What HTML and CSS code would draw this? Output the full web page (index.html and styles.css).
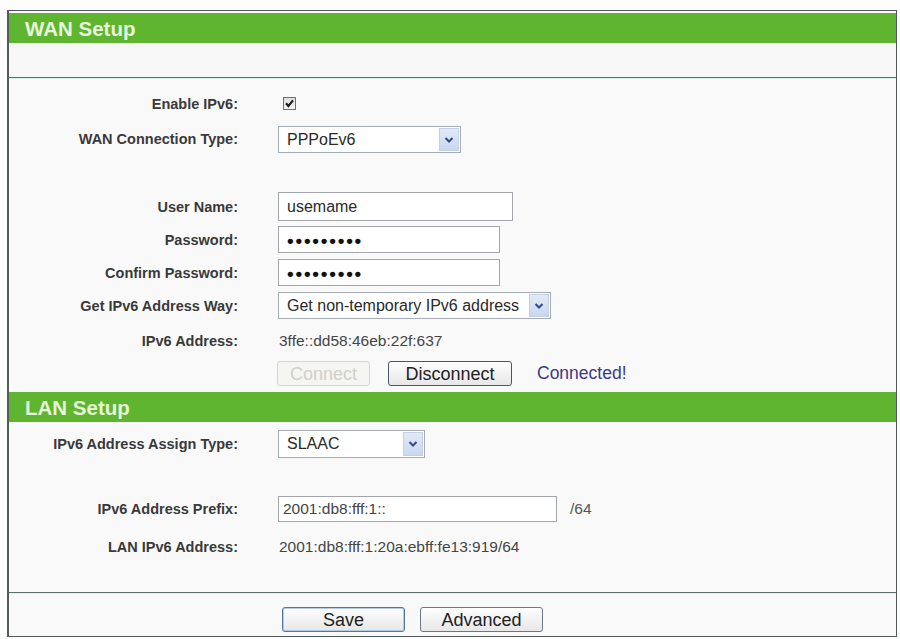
FILE: index.html
```html
<!DOCTYPE html>
<html>
<head>
<meta charset="utf-8">
<title>IPv6 Setup</title>
<link rel="stylesheet" href="styles.css">
</head>
<body>
<div class="panel">
  <div class="head head-wan">WAN Setup</div>
  <div class="band"></div>
  <div class="wan">
    <div class="row row-check">
      <div class="lbl">Enable IPv6:</div>
      <div class="val">
        <span class="checkbox"><svg width="11" height="11" viewBox="0 0 11 11"><path d="M2 5.2 L4.4 8 L9 2.4" fill="none" stroke="#1e1e1e" stroke-width="2.2"/></svg></span>
      </div>
    </div>
    <div class="row row-type">
      <div class="lbl">WAN Connection Type:</div>
      <div class="val">
        <div class="select sel-type"><span class="txt">PPPoEv6</span><span class="arrow"><svg width="10" height="8" viewBox="0 0 10 8"><path d="M1.5 2 L5 5.5 L8.5 2" fill="none" stroke="#2d4a9a" stroke-width="2"/></svg></span></div>
      </div>
    </div>
    <div class="spacer-a"></div>
    <div class="row">
      <div class="lbl">User Name:</div>
      <div class="val"><div class="field f-user">usemame</div></div>
    </div>
    <div class="row">
      <div class="lbl">Password:</div>
      <div class="val"><div class="field f-pass"><span class="dots">•••••••••</span></div></div>
    </div>
    <div class="row">
      <div class="lbl">Confirm Password:</div>
      <div class="val"><div class="field f-pass"><span class="dots">•••••••••</span></div></div>
    </div>
    <div class="row">
      <div class="lbl">Get IPv6 Address Way:</div>
      <div class="val">
        <div class="select sel-way"><span class="txt">Get non-temporary IPv6 address</span><span class="arrow"><svg width="10" height="8" viewBox="0 0 10 8"><path d="M1.5 2 L5 5.5 L8.5 2" fill="none" stroke="#2d4a9a" stroke-width="2"/></svg></span></div>
      </div>
    </div>
    <div class="row row-addr">
      <div class="lbl">IPv6 Address:</div>
      <div class="val"><span class="text">3ffe::dd58:46eb:22f:637</span></div>
    </div>
    <div class="row row-btns">
      <div class="lbl"></div>
      <div class="val">
        <button class="btn btn-connect" disabled>Connect</button>
        <button class="btn btn-disconnect">Disconnect</button>
        <span class="status">Connected!</span>
      </div>
    </div>
  </div>
  <div class="head">LAN Setup</div>
  <div class="lan">
    <div class="row row-assign">
      <div class="lbl">IPv6 Address Assign Type:</div>
      <div class="val">
        <div class="select sel-slaac"><span class="txt">SLAAC</span><span class="arrow"><svg width="10" height="8" viewBox="0 0 10 8"><path d="M1.5 2 L5 5.5 L8.5 2" fill="none" stroke="#2d4a9a" stroke-width="2"/></svg></span></div>
      </div>
    </div>
    <div class="spacer-b"></div>
    <div class="row row-prefix">
      <div class="lbl">IPv6 Address Prefix:</div>
      <div class="val"><div class="field f-prefix">2001:db8:fff:1::</div><span class="suffix">/64</span></div>
    </div>
    <div class="row row-lanaddr">
      <div class="lbl">LAN IPv6 Address:</div>
      <div class="val"><span class="text">2001:db8:fff:1:20a:ebff:fe13:919/64</span></div>
    </div>
  </div>
  <div class="foot">
    <button class="btn btn-save">Save</button>
    <button class="btn btn-adv">Advanced</button>
  </div>
</div>
</body>
</html>
```

FILE: styles.css
```css
* { box-sizing: border-box; }

body {
  margin: 0;
  background: #fdfdfd;
  font-family: "Liberation Sans", Arial, sans-serif;
}

.panel {
  margin: 10px 0 0 7px;
  width: 890px;
  height: 627px;
  border: 1px solid #4f5757;
  border-left: 2px solid #555b5b;
  background: #f9f9f9;
}

.head {
  height: 30px;
  background: #60b530;
  color: #e6f6dc;
  font-weight: bold;
  font-size: 20.5px;
  line-height: 31px;
  padding-left: 16px;
}

.head-wan { margin-top: 2px; }

.band {
  height: 35px;
  background: #f7f8f7;
  border-bottom: 1px solid #5c6e6e;
  box-shadow: 0 1px 0 #dcf2e8;
}

.wan {
  height: 314px;
  padding-top: 9px;
}

.lan {
  height: 171px;
  border-bottom: 1px solid #5c6e6e;
  box-shadow: 0 1px 0 #dcf2e8;
}

.row {
  display: flex;
  align-items: center;
  height: 33px;
}

.row-check { height: 34px; }
.row-type { height: 36px; }
.row-addr { height: 38px; }
.row-btns { height: 32px; padding-bottom: 5px; }
.row-assign { height: 44px; }
.row-prefix { height: 36px; }
.row-lanaddr { height: 40px; }

.spacer-a { height: 33px; }
.spacer-b { height: 25px; }

.lbl {
  width: 229px;
  flex: none;
  text-align: right;
  font-weight: bold;
  font-size: 14.5px;
  color: #3a3a3a;
}

.val {
  margin-left: 40px;
  display: flex;
  align-items: center;
}

.checkbox {
  width: 13px;
  height: 13px;
  margin-left: 5px;
  margin-top: -1px;
  border: 1px solid #6f6f6f;
  background: linear-gradient(#dedede, #f6f6f6);
  display: flex;
  align-items: center;
  justify-content: center;
}

.select {
  display: flex;
  height: 27px;
  border: 1px solid #a5adb7;
  background: #fff;
}

.select .txt {
  flex: 1;
  padding-left: 8px;
  font-size: 16px;
  line-height: 25px;
  color: #2a2a2a;
  white-space: nowrap;
}

.select .arrow {
  width: 20px;
  margin: 1px;
  background: linear-gradient(#e2eaf8, #c9d7ef);
  border: 1px solid #c3cfe3;
  display: flex;
  align-items: center;
  justify-content: center;
}

.sel-type { width: 183px; margin-top: 1px; }
.sel-way { width: 273px; }
.sel-slaac { width: 147px; height: 28px; }

.field {
  height: 27px;
  border: 1px solid #a3a7ac;
  background: #fff;
  padding-left: 8px;
  display: flex;
  align-items: center;
  font-size: 16px;
  color: #2a2a2a;
}

.f-user { width: 235px; height: 29px; }
.f-pass { width: 222px; }
.f-prefix { width: 279px; height: 26px; font-size: 15.5px; color: #444; padding-left: 4px; }

.dots {
  font-size: 19px;
  letter-spacing: 1.8px;
  line-height: 1;
  font-weight: bold;
  color: #111;
  margin-top: 1px;
}

.text {
  font-size: 15.5px;
  color: #454545;
  margin-left: 1px;
}

.suffix {
  margin-left: 13px;
  font-size: 15.5px;
  color: #555;
}

.btn {
  height: 25px;
  padding: 0;
  border: 1px solid #4a5866;
  border-radius: 3px;
  background: linear-gradient(#fefefe, #e7e7e7);
  font-family: "Liberation Sans", Arial, sans-serif;
  font-size: 18px;
  color: #222;
  line-height: 22px;
}

.btn-connect {
  width: 93px;
  margin-left: -1px;
  color: #d0d0c8;
  border-color: #d6d6ce;
  background: #f5f5f1;
}

.btn-disconnect {
  width: 124px;
  margin-left: 18px;
}

.status {
  margin-left: 25px;
  font-size: 17.5px;
  color: #3a3a86;
}

.foot {
  display: flex;
  gap: 15px;
  padding: 14px 0 0 273px;
}

.btn-save {
  width: 123px;
  border: 1px solid #4e77a6;
  box-shadow: inset 0 0 0 1px #b4cbe4;
}

.btn-adv {
  width: 123px;
  border-color: #6a7886;
}
```
